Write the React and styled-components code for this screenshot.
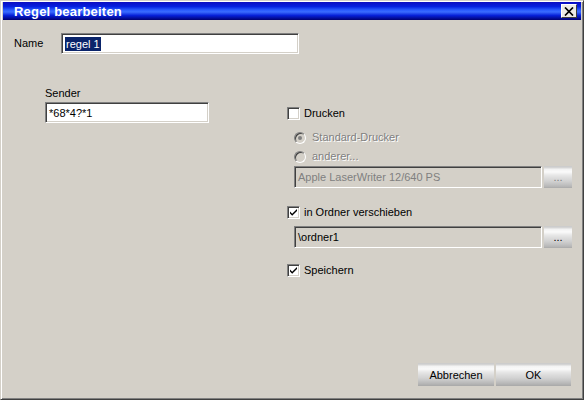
import React from "react";
import styled, { createGlobalStyle } from "styled-components";

const Global = createGlobalStyle`
  html, body {
    margin: 0;
    padding: 0;
    background: #d4d0c8;
  }
  body {
    font-family: "Liberation Sans", Arial, sans-serif;
    font-size: 11px;
    color: #000;
  }
`;

const Window = styled.div`
  width: 584px;
  height: 400px;
  box-sizing: border-box;
  display: flex;
  flex-direction: column;
  background: #d4d0c8;
  border-top: 1px solid #d4d0c8;
  border-left: 1px solid #d4d0c8;
  border-right: 1px solid #404040;
  border-bottom: 1px solid #404040;
  box-shadow: inset 1px 1px 0 #ffffff, inset -1px -1px 0 #808080;
  padding: 1px 2px 2px 2px;
`;

const TitleBar = styled.div`
  height: 18px;
  flex: none;
  display: flex;
  align-items: center;
  justify-content: space-between;
  padding: 0 4px 0 11px;
  background: linear-gradient(
    to bottom,
    #0c0cc0 0%,
    #0620e0 25%,
    #2a5cff 45%,
    #3a6cff 55%,
    #0620d8 75%,
    #000070 100%
  );
`;

const Title = styled.span`
  color: #fff;
  font-weight: bold;
  font-size: 13px;
  letter-spacing: 0.2px;
`;

const CloseButton = styled.div`
  width: 16px;
  height: 14px;
  box-sizing: border-box;
  display: flex;
  align-items: center;
  justify-content: center;
  background: #ecebe6;
  border-top: 1px solid #ffffff;
  border-left: 1px solid #ffffff;
  border-right: 1px solid #404040;
  border-bottom: 1px solid #404040;
`;

const Body = styled.div`
  flex: 1;
  display: flex;
  flex-direction: column;
  padding: 13px 10px 11px 11px;
`;

const NameRow = styled.div`
  display: flex;
  align-items: center;
`;

const Label = styled.label`
  width: ${(p) => p.$width || "auto"};
  display: block;
  line-height: 13px;
  color: ${(p) => (p.$disabled ? "#808080" : "#000")};
  text-shadow: ${(p) => (p.$disabled ? "1px 1px 0 #ffffff" : "none")};
`;

const TextBox = styled.div`
  width: ${(p) => p.$width}px;
  height: ${(p) => p.$height || 21}px;
  box-sizing: border-box;
  display: flex;
  align-items: center;
  padding-left: 3px;
  background: ${(p) => (p.$gray ? "#d4d0c8" : "#ffffff")};
  color: ${(p) => (p.$disabled ? "#808080" : "#000")};
  border-top: 1px solid #808080;
  border-left: 1px solid #808080;
  border-right: 1px solid #ffffff;
  border-bottom: 1px solid #ffffff;
  box-shadow: inset 1px 1px 0 #404040, inset -1px -1px 0 #d4d0c8;
  white-space: nowrap;
`;

const Selected = styled.span`
  background: #0a246a;
  color: #fff;
  padding: 0 1px;
  line-height: 14px;
`;

const Columns = styled.div`
  display: flex;
  align-items: flex-start;
  margin-top: 33px;
`;

const LeftCol = styled.div`
  margin-left: 31px;
  width: 164px;
  display: flex;
  flex-direction: column;
  gap: 2px;
`;

const RightCol = styled.div`
  margin-left: 78px;
  padding-top: 20px;
  display: flex;
  flex-direction: column;
`;

const CheckRow = styled.div`
  display: flex;
  align-items: center;
  gap: 4px;
  height: 13px;
  margin-top: ${(p) => p.$top || 0}px;
`;

const Box = styled.div`
  width: 13px;
  height: 13px;
  box-sizing: border-box;
  background: #fff;
  border-top: 1px solid #808080;
  border-left: 1px solid #808080;
  border-right: 1px solid #ffffff;
  border-bottom: 1px solid #ffffff;
  box-shadow: inset 1px 1px 0 #404040, inset -1px -1px 0 #d4d0c8;
  display: flex;
  align-items: center;
  justify-content: center;
`;

const RadioRow = styled.div`
  display: flex;
  align-items: center;
  gap: 6px;
  height: 13px;
  margin-left: 7px;
  margin-top: ${(p) => p.$top || 0}px;
`;

const Radio = styled.div`
  width: 12px;
  height: 12px;
  box-sizing: border-box;
  border-radius: 50%;
  background: #d4d0c8;
  border: 1px solid;
  border-color: #808080 #ffffff #ffffff #808080;
  box-shadow: inset 1px 1px 0 #404040;
  display: flex;
  align-items: center;
  justify-content: center;
`;

const Dot = styled.div`
  width: 4px;
  height: 4px;
  border-radius: 50%;
  background: #808080;
`;

const FieldRow = styled.div`
  display: flex;
  align-items: center;
  gap: 2px;
  margin-left: 7px;
  margin-top: ${(p) => p.$top || 0}px;
`;

const SkinButton = styled.button`
  width: ${(p) => p.$width}px;
  height: ${(p) => p.$height}px;
  box-sizing: border-box;
  padding: 0;
  border: none;
  font-family: "Liberation Sans", Arial, sans-serif;
  font-size: 11px;
  color: ${(p) => (p.$disabled ? "#808080" : "#000")};
  background: linear-gradient(
    to bottom,
    #c8c8c8 0px,
    #d8d8d8 2px,
    #f2f2f2 3px,
    #fafafa 6px,
    #e8e8e8 9px,
    #dcdcdc 12px,
    #d2d2d2 15px,
    #c4c4c4 18px,
    #b4b4b4 21px,
    #a8a8a8 100%
  );
`;

const Footer = styled.div`
  margin-top: auto;
  display: flex;
  justify-content: flex-end;
  gap: 2px;
`;

const Check = () => (
  <svg width="9" height="9" viewBox="0 0 9 9">
    <path d="M1 3.5 L3.2 5.8 L8 1 L8 3 L3.2 7.8 L1 5.5 Z" fill="#000" />
  </svg>
);

export default function App() {
  return (
    <>
      <Global />
      <Window>
        <TitleBar>
          <Title>Regel bearbeiten</Title>
          <CloseButton>
            <svg width="10" height="9" viewBox="0 0 10 9">
              <path d="M1 0.5 L9 8.5 M9 0.5 L1 8.5" stroke="#000" strokeWidth="1.7" />
            </svg>
          </CloseButton>
        </TitleBar>
        <Body>
          <NameRow>
            <Label $width="47px">Name</Label>
            <TextBox $width={238}>
              <Selected>regel 1</Selected>
            </TextBox>
          </NameRow>
          <Columns>
            <LeftCol>
              <Label>Sender</Label>
              <TextBox $width={164}>*68*4?*1</TextBox>
            </LeftCol>
            <RightCol>
              <CheckRow>
                <Box />
                <Label>Drucken</Label>
              </CheckRow>
              <RadioRow $top={11}>
                <Radio>
                  <Dot />
                </Radio>
                <Label $disabled>Standard-Drucker</Label>
              </RadioRow>
              <RadioRow $top={6}>
                <Radio />
                <Label $disabled>anderer...</Label>
              </RadioRow>
              <FieldRow $top={3}>
                <TextBox $width={248} $height={22} $gray $disabled>
                  Apple LaserWriter 12/640 PS
                </TextBox>
                <SkinButton $width={28} $height={22} $disabled>
                  ...
                </SkinButton>
              </FieldRow>
              <CheckRow $top={18}>
                <Box>
                  <Check />
                </Box>
                <Label>in Ordner verschieben</Label>
              </CheckRow>
              <FieldRow $top={7}>
                <TextBox $width={248} $height={22} $gray>
                  \ordner1
                </TextBox>
                <SkinButton $width={28} $height={22}>
                  ...
                </SkinButton>
              </FieldRow>
              <CheckRow $top={16}>
                <Box>
                  <Check />
                </Box>
                <Label>Speichern</Label>
              </CheckRow>
            </RightCol>
          </Columns>
          <Footer>
            <SkinButton $width={76} $height={23}>
              Abbrechen
            </SkinButton>
            <SkinButton $width={75} $height={23}>
              OK
            </SkinButton>
          </Footer>
        </Body>
      </Window>
    </>
  );
}
